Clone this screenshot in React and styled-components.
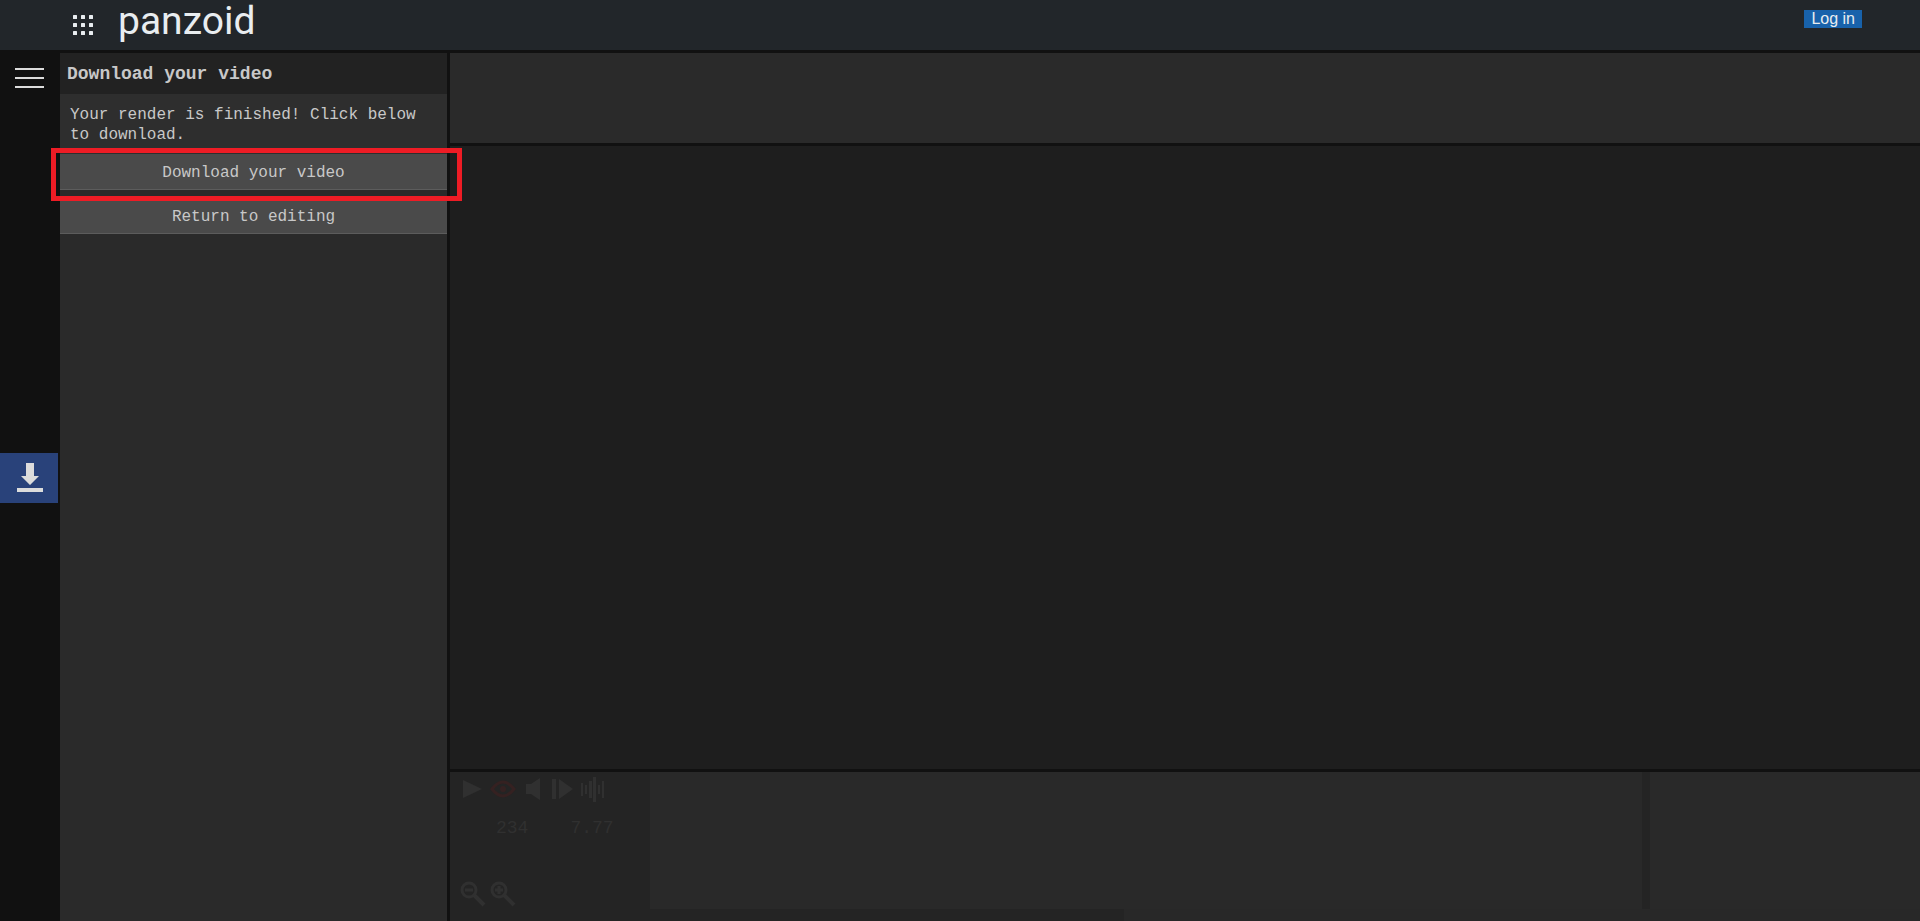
import React from 'react'
import styled, { createGlobalStyle } from 'styled-components'


const App = () => (
  <Page>
    <GlobalStyle />
    <Header>
      <AppsButton aria-label="Apps">
        <svg width="20" height="20" viewBox="0 0 20 20" fill="#e9edf0">
          {[0, 8, 16].map((y) => [0, 8, 16].map((x) => (
            <rect key={x + '-' + y} x={x} y={y} width="4" height="4" rx="0.5" />
          )))}
        </svg>
      </AppsButton>
      <Logo href="#">panzoid</Logo>
      <LoginLink href="#">Log in</LoginLink>
    </Header>
    <Workspace>
      <Sidebar>
        <MenuButton aria-label="Menu">
          <svg width="29" height="21" viewBox="0 0 29 21" fill="#dcdcdc">
            <rect y="0" width="29" height="2" />
            <rect y="9" width="29" height="2" />
            <rect y="18" width="29" height="2" />
          </svg>
        </MenuButton>
        <DownloadTab aria-label="Download">
          <svg width="26" height="30" viewBox="0 0 26 30" fill="#dcdcdc">
            <path d="M9 0H17V13H22L13 22L4 13H9Z" />
            <rect y="25" width="26" height="4" />
          </svg>
        </DownloadTab>
      </Sidebar>
      <Panel>
        <PanelTitle>Download your video</PanelTitle>
        <Message>Your render is finished! Click below to download.</Message>
        <Actions>
          <Highlighted>
            <PanelButton>Download your video</PanelButton>
          </Highlighted>
          <PanelButton>Return to editing</PanelButton>
        </Actions>
      </Panel>
      <Stage>
        <Toolbar />
        <Preview />
        <Timeline>
          <Controls>
            <IconRow>
              <IconButton aria-label="Play">
                <svg width="28" height="26" viewBox="0 0 28 26" fill="#303030">
                  <path d="M3 4L22 13L3 22Z" />
                </svg>
              </IconButton>
              <IconButton aria-label="Preview">
                <svg width="32" height="26" viewBox="0 0 32 26" fill="none" stroke="#352121" strokeWidth="3">
                  <path d="M4 13Q15 -1 26 13Q15 27 4 13Z" />
                  <circle cx="15" cy="13" r="3" fill="#352121" stroke="none" />
                </svg>
              </IconButton>
              <IconButton aria-label="Mute">
                <svg width="26" height="26" viewBox="0 0 26 26" fill="#303030">
                  <path d="M6 8H11L20 2V24L11 18H6Z" />
                </svg>
              </IconButton>
              <IconButton aria-label="Step">
                <svg width="28" height="26" viewBox="0 0 28 26" fill="#303030">
                  <path d="M6 3H10V23H6ZM13 3L27 13L13 23Z" />
                </svg>
              </IconButton>
              <IconButton aria-label="Waveform">
                <svg width="32" height="26" viewBox="0 0 32 26" fill="#303030">
                  <path d="M7 7H9V20H7ZM11 9H13V18H11ZM15 5H18V22H15ZM19 1H22V26H19ZM24 9H26V18H24ZM28 5H30V22H28Z" />
                </svg>
              </IconButton>
            </IconRow>
            <Times>
              <span>234</span>
              <span>7.77</span>
            </Times>
            <ZoomRow>
              <IconButton aria-label="Zoom out">
                <ZoomIcon />
              </IconButton>
              <IconButton aria-label="Zoom in">
                <ZoomIcon plus />
              </IconButton>
            </ZoomRow>
          </Controls>
          <Tracks>
            <TrackRow>
              <Track />
              <Track $side />
            </TrackRow>
            <Scrollbar>
              <Thumb />
            </Scrollbar>
          </Tracks>
        </Timeline>
      </Stage>
    </Workspace>
  </Page>
)

const ZoomIcon = ({ plus }) => (
  <svg width="26" height="26" viewBox="0 0 26 26" fill="none" stroke="#303030" strokeWidth="3">
    <circle cx="9" cy="9" r="7" />
    <path d="M14 14L24 24" strokeWidth="4" />
    <path d={plus ? 'M5 9H13M9 5V13' : 'M5 9H13'} />
  </svg>
)

const GlobalStyle = createGlobalStyle`
  * {
    box-sizing: border-box;
  }
  body {
    margin: 0;
    background-color: #111;
    color: #c8c8c8;
    font-family: 'Liberation Mono', monospace;
    font-size: 16px;
  }
  button {
    margin: 0;
    padding: 0;
    border: none;
    background: none;
    color: inherit;
    font: inherit;
    cursor: pointer;
  }
  svg {
    display: block;
  }
`

const Page = styled.div`
  display: flex;
  flex-direction: column;
  gap: 3px;
  min-height: 100vh;
`

const Header = styled.header`
  display: flex;
  align-items: flex-start;
  height: 50px;
  padding: 0 58px 0 73px;
  background-color: #22262a;
`

const AppsButton = styled.button`
  padding-top: 15px;
`

const Logo = styled.a`
  margin-left: 25px;
  color: #e9edf0;
  font-family: Roboto, sans-serif;
  font-size: 39px;
  line-height: 42px;
  text-decoration: none;
`

const LoginLink = styled.a`
  margin: 10px 0 0 auto;
  padding: 0 7px;
  background-color: #1862ab;
  color: #e9edf0;
  font-family: 'Liberation Sans', sans-serif;
  line-height: 18px;
  text-decoration: none;
`

const Workspace = styled.div`
  display: flex;
  flex: 1;
`

const Sidebar = styled.nav`
  display: flex;
  flex-direction: column;
  width: 60px;
  padding-bottom: 54px;
`

const MenuButton = styled.button`
  padding: 15px 0 0 15px;
`

const DownloadTab = styled.button`
  display: flex;
  justify-content: center;
  align-items: center;
  width: 58px;
  height: 50px;
  margin: auto 0;
  padding-left: 2px;
  background-color: #29427a;
`

const Panel = styled.aside`
  width: 387px;
  margin-right: 3px;
  background-color: #2a2a2a;
`

const PanelTitle = styled.h1`
  margin: 0;
  padding: 1px 7px 0;
  background-color: #222;
  font-size: 18px;
  line-height: 40px;
`

const Message = styled.p`
  margin: 0;
  padding: 11px 10px 9px;
  background-color: #2e2e2e;
  line-height: 20px;
`

const Actions = styled.div`
  display: flex;
  flex-direction: column;
  gap: 8px;
`

const PanelButton = styled.button`
  width: 100%;
  height: 36px;
  padding-top: 2px;
  border-bottom: 1px solid #5c5c5c;
  background-color: #4a4a4a;
`

/* red frame around the main action */
const Highlighted = styled.div`
  position: relative;
  &::after {
    content: '';
    position: absolute;
    inset: -6px -15px -11px -9px;
    border: 5px solid #ee1c25;
    pointer-events: none;
  }
`

const Stage = styled.main`
  display: flex;
  flex: 1;
  flex-direction: column;
  gap: 3px;
`

const Toolbar = styled.div`
  height: 90px;
  background-color: #2a2a2a;
`

const Preview = styled.div`
  flex: 1;
  background-color: #1e1e1e;
`

const Timeline = styled.section`
  display: flex;
  height: 149px;
  background-color: #242424;
`

const Controls = styled.div`
  display: flex;
  flex-direction: column;
  width: 200px;
  padding: 4px 10px 14px;
`

const IconRow = styled.div`
  display: flex;
`

const ZoomRow = styled.div`
  display: flex;
  gap: 4px;
  margin-top: auto;
`

const IconButton = styled.button`
  flex: none;
`

const Times = styled.div`
  display: flex;
  gap: 42px;
  margin-top: 16px;
  padding-left: 36px;
  color: #303030;
  font-size: 18px;
  line-height: 20px;
`

const Tracks = styled.div`
  display: flex;
  flex: 1;
  flex-direction: column;
`

const TrackRow = styled.div`
  display: flex;
  flex: 1;
  gap: 8px;
`

const Track = styled.div`
  flex: ${(props) => (props.$side ? '0 0 270px' : '1')};
  background-color: #292929;
`

const Scrollbar = styled.div`
  height: 12px;
  background-color: #282828;
`

const Thumb = styled.div`
  width: 474px;
  height: 100%;
  background-color: #242424;
`

export default App
